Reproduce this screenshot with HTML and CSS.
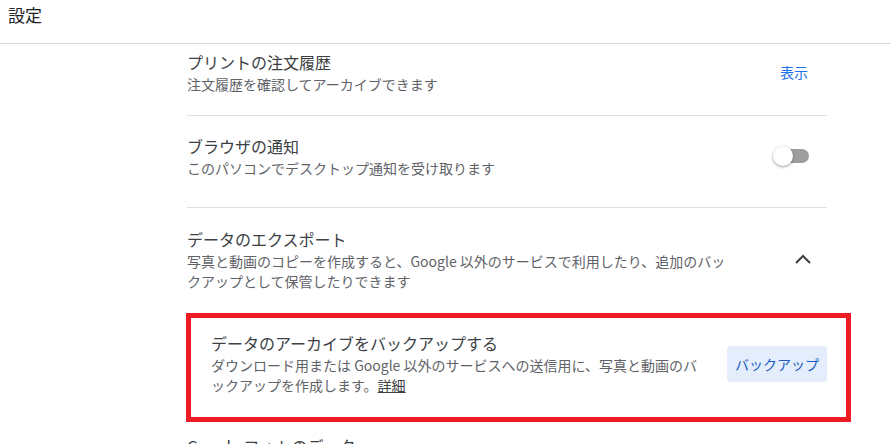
FILE: index.html
```html
<!DOCTYPE html>
<html lang="ja">
<head>
<meta charset="utf-8">
<title>設定</title>
<link rel="stylesheet" href="styles.css">
</head>
<body>
<header class="topbar">
  <h1 class="topbar-title">設定</h1>
</header>
<main class="settings">
  <section class="row row-first">
    <div class="row-text">
      <div class="row-title">プリントの注文履歴</div>
      <div class="row-sub">注文履歴を確認してアーカイブできます</div>
    </div>
    <div class="row-action">
      <a class="text-btn" href="#">表示</a>
    </div>
  </section>
  <section class="row row-toggle">
    <div class="row-text">
      <div class="row-title">ブラウザの通知</div>
      <div class="row-sub">このパソコンでデスクトップ通知を受け取ります</div>
    </div>
    <div class="row-action">
      <span class="toggle"><span class="toggle-track"></span><span class="toggle-thumb"></span></span>
    </div>
  </section>
  <section class="row-group">
    <div class="row row-expanded">
      <div class="row-text">
        <div class="row-title">データのエクスポート</div>
        <div class="row-sub">写真と動画のコピーを作成すると、Google 以外のサービスで利用したり、追加のバックアップとして保管したりできます</div>
      </div>
      <div class="row-action">
        <svg class="chevron" width="16" height="10" viewBox="0 0 16 10"><path d="M1 9 L8 2 L15 9" fill="none" stroke="#3c4043" stroke-width="2"/></svg>
      </div>
    </div>
    <div class="subrow">
      <div class="subrow-text">
        <div class="row-title">データのアーカイブをバックアップする</div>
        <div class="row-sub">ダウンロード用または Google 以外のサービスへの送信用に、写真と動画のバックアップを作成します。<a class="link" href="#">詳細</a></div>
      </div>
      <button class="tonal-btn" type="button">バックアップ</button>
    </div>
    <div class="row row-last">
      <div class="row-text">
        <div class="row-title">Google フォトのデータ</div>
      </div>
    </div>
  </section>
</main>
</body>
</html>
```
FILE: styles.css
```css
html, body {
  margin: 0;
  padding: 0;
  background: #ffffff;
  height: 444px;
  overflow: hidden;
  font-family: "Noto Sans CJK JP", "Noto Sans", sans-serif;
  color: #202124;
}

.topbar {
  border-bottom: 1px solid #dadce0;
  padding: 3px 0 0 8px;
  height: 40px;
}

.topbar-title {
  margin: 0;
  font-size: 17px;
  font-weight: 400;
  line-height: 24px;
  color: #202124;
}

.settings {
  margin-left: 187px;
  width: 640px;
}

.row {
  display: flex;
  align-items: center;
  border-bottom: 1px solid #e0e0e0;
}

.row-first {
  padding: 6px 0 21px;
}

.row-toggle {
  padding: 18px 0 29px;
}

.row-text {
  flex: 1;
  min-width: 0;
}

.row-title {
  font-size: 16px;
  line-height: 24px;
  color: #3c4043;
}

.row-sub {
  font-size: 14px;
  line-height: 20px;
  color: #5f6368;
}

.row-action {
  width: 68px;
  margin-left: 24px;
  display: flex;
  justify-content: flex-end;
  align-items: center;
  box-sizing: border-box;
  padding-right: 18px;
}

.text-btn {
  font-size: 14px;
  line-height: 20px;
  color: #1a73e8;
  text-decoration: none;
  margin-right: 1px;
}

.toggle {
  position: relative;
  width: 36px;
  height: 20px;
  display: block;
}

.toggle-track {
  position: absolute;
  left: 2px;
  right: 0;
  top: 3px;
  height: 14px;
  border-radius: 7px;
  background: #9e9e9e;
}

.toggle-thumb {
  position: absolute;
  left: 0;
  top: 0;
  width: 20px;
  height: 20px;
  border-radius: 50%;
  background: #ffffff;
  box-shadow: 0 1px 3px rgba(0, 0, 0, 0.4);
}

.row-group {
  border-bottom: 1px solid #e0e0e0;
}

.row-expanded {
  border-bottom: none;
  padding: 19px 0 22px;
}

.chevron {
  display: block;
  margin-right: -2px;
}

.subrow {
  position: relative;
  display: flex;
  align-items: center;
  padding: 18px 0 27px 24px;
}

.subrow::after {
  content: "";
  position: absolute;
  left: -1px;
  top: 0;
  right: -24px;
  bottom: 0;
  border: 5px solid #ed1c24;
  pointer-events: none;
}

.subrow-text {
  flex: 1;
  min-width: 0;
  margin-right: 20px;
}

.link {
  color: #3c4043;
  text-decoration: underline;
}

.tonal-btn {
  border: none;
  border-radius: 4px;
  background: #e3edfb;
  color: #1a5dc4;
  font-family: "Noto Sans CJK JP", "Noto Sans", sans-serif;
  font-size: 14px;
  line-height: 20px;
  height: 36px;
  padding: 0 8px;
  flex: none;
  margin-top: 2px;
}

.row-last {
  border-bottom: none;
  padding: 12px 0 20px;
}
```
